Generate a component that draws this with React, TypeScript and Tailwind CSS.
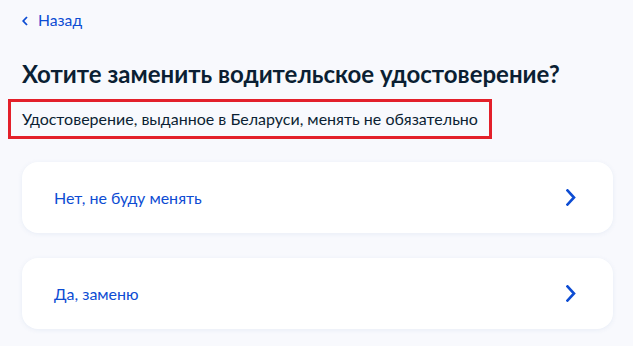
import React from "react";

function Chevron() {
  return (
    <svg width="10" height="17" viewBox="0 0 10 17" fill="none">
      <path d="M1.5 1.5L8 8.5L1.5 15.5" stroke="#0d4cd3" strokeWidth="2.6" strokeLinecap="square" />
    </svg>
  );
}

function Option({ label }: { label: string }) {
  return (
    <div className="flex h-[71px] items-center justify-between rounded-[16px] bg-white pl-[32px] pr-[37px] shadow-[0_1px_4px_rgba(230,235,245,0.9)]">
      <span className="text-[16px] text-[#0d4cd3]">{label}</span>
      <Chevron />
    </div>
  );
}

export default function App() {
  return (
    <div
      className="h-[346px] w-[633px] bg-[#f8f9fd] pl-[22px] pr-[20px] pt-[11px]"
      style={{ fontFamily: "Lato, 'Noto Sans', sans-serif" }}
    >
      <div className="flex h-[20px] items-center gap-[10px] text-[15.7px] text-[#0d4cd3]">
        <svg width="6" height="10" viewBox="0 0 6 10" fill="none">
          <path d="M5 1L1.2 5L5 9" stroke="#0d4cd3" strokeWidth="1.8" />
        </svg>
        <span>Назад</span>
      </div>
      <h1 className="mt-[29px] text-[24px] font-bold leading-[28px] text-[#0b1f33]">
        Хотите заменить водительское удостоверение?
      </h1>
      <div className="-ml-[14px] mt-[11px] flex h-[40px] w-[484px] items-center border-[3px] border-[#e3202a] pl-[11px] text-[16px] text-[#0b1f33]">
        Удостоверение, выданное в Беларуси, менять не обязательно
      </div>
      <div className="mt-[23px] flex flex-col gap-[25px]">
        <Option label="Нет, не буду менять" />
        <Option label="Да, заменю" />
      </div>
    </div>
  );
}
